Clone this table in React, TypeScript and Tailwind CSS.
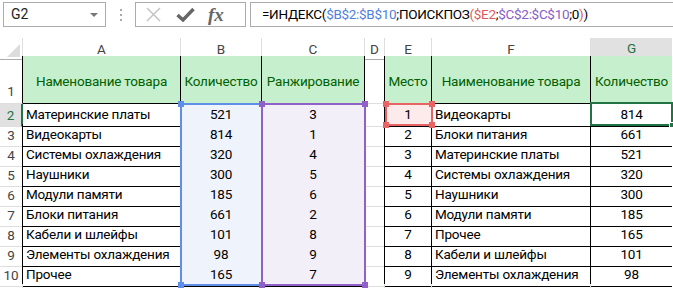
import React from "react";

const font = "font-['Roboto','Liberation_Sans',sans-serif]";

const left = [
	["Материнские платы", "521", "3"],
	["Видеокарты", "814", "1"],
	["Системы охлаждения", "320", "4"],
	["Наушники", "300", "5"],
	["Модули памяти", "185", "6"],
	["Блоки питания", "661", "2"],
	["Кабели и шлейфы", "101", "8"],
	["Элементы охлаждения", "98", "9"],
	["Прочее", "165", "7"],
];

const right = [
	["1", "Видеокарты", "814"],
	["2", "Блоки питания", "661"],
	["3", "Материнские платы", "521"],
	["4", "Системы охлаждения", "320"],
	["5", "Наушники", "300"],
	["6", "Модули памяти", "185"],
	["7", "Прочее", "165"],
	["8", "Кабели и шлейфы", "101"],
	["9", "Элементы охлаждения", "98"],
];

const cols = "grid grid-cols-[23px_158px_81px_103px_20px_47px_159px_81px]";

// small square marker at the corners of a reference frame
const Handle = ({ className }: { className: string }) => <div className={`absolute w-[6px] h-[6px] ${className}`} />;

const Toolbar = () => (
	<div className="h-[38px] flex items-start pt-[2px] bg-white">
		<div className="ml-[3px] w-[103px] h-[25px] border border-[#ababab] flex items-center justify-between pl-[7px] pr-[7px] text-[14px] text-[#222]">
			<span>G2</span>
			<span className="w-0 h-0 border-l-[4px] border-r-[4px] border-t-[4px] border-l-transparent border-r-transparent border-t-[#777]" />
		</div>
		<div className="w-[29px] h-[25px] flex flex-col items-center justify-center gap-[3px]">
			<span className="w-[2px] h-[2px] bg-[#aaa]" />
			<span className="w-[2px] h-[2px] bg-[#aaa]" />
			<span className="w-[2px] h-[2px] bg-[#aaa]" />
		</div>
		<div className="w-[111px] h-[25px] border border-[#ababab] flex items-center">
			<svg className="ml-[10px]" width="15" height="15" viewBox="0 0 15 15">
				<path d="M1 1 L14 14 M14 1 L1 14" stroke="#c4c4c4" strokeWidth="1.5" />
			</svg>
			<svg className="ml-[15px]" width="19" height="15" viewBox="0 0 19 15">
				<path d="M1.5 8 L7 13 L17.5 2" stroke="#666" strokeWidth="3.4" fill="none" />
			</svg>
			<span className="ml-[13px] font-['Liberation_Serif',serif] italic font-bold text-[19px] text-[#666] leading-none">fx</span>
		</div>
		<div className="ml-[4px] flex-1 h-[25px] border-l border-t border-b border-[#ababab] flex items-center pl-[11px] text-[13.5px] tracking-[-0.3px] text-black whitespace-nowrap">
			<span>=ИНДЕКС(</span>
			<span className="text-[#4f7fe0]">$B$2:$B$10</span>
			<span>;ПОИСКПОЗ</span>
			<span className="text-[#e05a5a]">(</span>
			<span className="text-[#e05a5a]">$E2</span>
			<span>;</span>
			<span className="text-[#8a5cc8]">$C$2:$C$10</span>
			<span>;0</span>
			<span className="text-[#e05a5a]">)</span>
			<span>)</span>
		</div>
	</div>
);

const ColHeader = () => (
	<div className={`${cols} h-[18px] text-[13.5px] text-[#444]`}>
		<div className="relative border-r border-b border-r-[#dedede] border-b-[#ababab] bg-white">
			<svg className="absolute right-[2px] bottom-[2px]" width="13" height="13" viewBox="0 0 13 13">
				<path d="M13 0 L13 13 L0 13 Z" fill="#dcdcdc" />
			</svg>
		</div>
		{["A", "B", "C", "D", "E", "F"].map((c) => (
			<div key={c} className="flex items-center justify-center border-r border-b border-r-[#dedede] border-b-[#ababab]">
				{c}
			</div>
		))}
		<div className="flex items-center justify-center bg-[#e1e1e1] border-b-2 border-[#217346] text-[#217346]">G</div>
	</div>
);

const txt = "px-[3px] flex items-end pb-[2px] whitespace-nowrap";
const num = "flex items-end justify-center pb-[2px]";
const head = "flex items-center justify-center pt-[3px] bg-[#c6efce] text-[#006100] whitespace-nowrap";

const App: React.FC = () => {
	return (
		<div className={`w-[673px] h-[288px] overflow-hidden bg-white ${font}`}>
			<Toolbar />
			<ColHeader />

			<div className="relative text-[13.5px] tracking-[-0.2px] text-black">
				{/* Row 1: green headers */}
				<div className={`${cols} h-[48px]`}>
					<div className="flex items-end justify-center pb-[2px] text-[13.5px] tracking-normal text-[#444] border-r border-b border-r-black border-b-[#dedede]">1</div>
					<div className={`${head} border-r border-b border-black`}>Наменование товара</div>
					<div className={`${head} border-r border-b border-black`}>Количество</div>
					<div className={`${head} border-r border-b border-black`}>Ранжирование</div>
					<div className="border-r border-b border-r-black border-b-[#dedede]" />
					<div className={`${head} border-r border-b border-black`}>Место</div>
					<div className={`${head} border-r border-b border-black`}>Наименование товара</div>
					<div className={`${head} border-b border-black`}>Количество</div>
				</div>

				{/* Rows 2-10 */}
				{left.map((l, i) => {
					const r = right[i];
					const active = i === 0;
					return (
						<div key={i} className={`${cols} h-[20px]`}>
							<div
								className={
									active
										? "flex items-end justify-center pb-[1px] text-[13.5px] tracking-normal text-[#217346] bg-[#e1e1e1] border-r-2 border-b border-r-[#217346] border-b-[#dedede]"
										: "flex items-end justify-center pb-[1px] text-[13.5px] tracking-normal text-[#444] border-r border-b border-r-black border-b-[#dedede]"
								}
							>
								{i + 2}
							</div>
							<div className={`${txt} border-r border-b border-black`}>{l[0]}</div>
							<div className={`${num} bg-[#eef3fc] border-r border-b border-black`}>{l[1]}</div>
							<div className={`${num} bg-[#f3eff9] border-r border-b border-black`}>{l[2]}</div>
							<div className="border-r border-b border-r-black border-b-[#dedede]" />
							<div className={`${num} ${active ? "bg-[#fdeaea]" : ""} border-r border-b border-black`}>{r[0]}</div>
							<div className={`${txt} border-r border-b border-black`}>{r[1]}</div>
							<div className={`${num} border-b border-black`}>{r[2]}</div>
						</div>
					);
				})}

				{/* Row 11, cut off */}
				<div className={`${cols} h-[20px]`}>
					<div className="border-r border-[#dedede]" />
					<div className="border-r border-[#dedede]" />
					<div className="border-r border-[#dedede]" />
					<div className="border-r border-[#dedede]" />
					<div className="border-r border-[#dedede]" />
					<div className="border-r border-[#dedede]" />
					<div className="border-r border-[#dedede]" />
					<div />
				</div>

				{/* Reference frame B2:B10 */}
				<div className="absolute left-[180px] top-[47px] w-[83px] h-[183px] border-2 border-[#5f8ee8]">
					<Handle className="-left-[4px] -top-[4px] bg-[#5f8ee8]" />
					<Handle className="-right-[4px] -top-[4px] bg-[#5f8ee8]" />
					<Handle className="-left-[4px] -bottom-[4px] bg-[#5f8ee8]" />
					<Handle className="-right-[4px] -bottom-[4px] bg-[#5f8ee8]" />
				</div>
				{/* Reference frame C2:C10 */}
				<div className="absolute left-[261px] top-[47px] w-[105px] h-[183px] border-2 border-[#9062c8]">
					<Handle className="-left-[4px] -top-[4px] bg-[#9062c8]" />
					<Handle className="-right-[4px] -top-[4px] bg-[#9062c8]" />
					<Handle className="-left-[4px] -bottom-[4px] bg-[#9062c8]" />
					<Handle className="-right-[4px] -bottom-[4px] bg-[#9062c8]" />
				</div>
				{/* Reference frame E2 */}
				<div className="absolute left-[385px] top-[47px] w-[48px] h-[23px] border-2 border-[#e86464]">
					<Handle className="-left-[4px] -top-[4px] bg-[#e86464]" />
					<Handle className="-right-[4px] -top-[4px] bg-[#e86464]" />
					<Handle className="-left-[4px] -bottom-[4px] bg-[#e86464]" />
					<Handle className="-right-[4px] -bottom-[4px] bg-[#e86464]" />
				</div>
				{/* Active cell G2 */}
				<div className="absolute left-[590px] top-[46px] w-[83px] h-[24px] border-2 border-[#217346]">
					<div className="absolute -right-[4px] -bottom-[4px] w-[6px] h-[6px] bg-[#217346] border border-white" />
				</div>
			</div>
		</div>
	);
};

export default App;
